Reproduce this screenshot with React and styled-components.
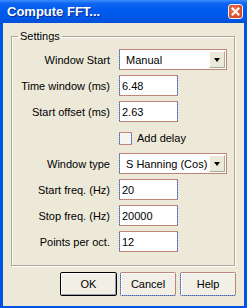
import React from "react";
import styled, { createGlobalStyle, css } from "styled-components";

const colors = {
  xpBlue: "#0054E3",
  face: "#ECE9D8",
  ditherA: "#E26A3E",
  ditherB: "#3A62CC",
  ditherC: "#9C9FB0",
  shadow: "#ACA899",
  text: "#000000",
};

// XP's #7F9DB9 control border, as it looks in a 256-colour (dithered) capture
const dither = css`
  border: 1px solid transparent;
  background:
    linear-gradient(${(p) => p.$fill || "#fff"}, ${(p) => p.$fill || "#fff"}) padding-box,
    conic-gradient(
        ${colors.ditherA} 0 25%,
        ${colors.ditherC} 0 50%,
        ${colors.ditherB} 0 75%,
        ${colors.ditherC} 0
      )
      0 0 / 2px 2px border-box;
`;

const GlobalStyle = createGlobalStyle`
  body {
    margin: 0;
    font-family: "Liberation Sans", Arial, sans-serif;
    font-size: 11px;
  }
`;

const Window = styled.div`
  width: 247px;
  height: 308px;
  box-sizing: border-box;
  background: ${colors.xpBlue};
  display: flex;
  flex-direction: column;
  overflow: hidden;
`;

const TitleBar = styled.div`
  height: 23px;
  flex: none;
  display: flex;
  align-items: center;
  justify-content: space-between;
  padding: 0 3px 0 7px;
  background: linear-gradient(
    to bottom,
    #3A8CFF 0%,
    #0F66F2 15%,
    #005CF0 40%,
    #0056E6 80%,
    #004FD8 100%
  );
`;

const Title = styled.span`
  font-family: "Liberation Sans", Arial, sans-serif;
  font-weight: 700;
  font-size: 13px;
  color: #fff;
  text-shadow: 1px 1px 0 #0A2A8C;
`;

const CloseButton = styled.div`
  width: 15px;
  height: 15px;
  box-sizing: border-box;
  border: 1px solid #F2F2F2;
  border-radius: 3px;
  background: radial-gradient(circle at 40% 40%, #EE7A58, #D6482A 70%);
  display: flex;
  align-items: center;
  justify-content: center;
  margin-right: 1px;
`;

const Content = styled.div`
  flex: 1;
  margin: 0 3px 2px;
  background: ${colors.face};
  padding: 7px 9px 0 8px;
  display: flex;
  flex-direction: column;
`;

const Group = styled.fieldset`
  margin: 0;
  padding: 6px 0 13px 0;
  border: 1px solid #ACA899;
  box-shadow: inset 1px 1px 0 #fff, 1px 1px 0 #fff;
`;

const Legend = styled.legend`
  margin-left: 6px;
  padding: 0 2px;
  line-height: 13px;
  color: ${colors.text};
`;

const Form = styled.div`
  display: grid;
  grid-template-columns: 98px 108px;
  grid-auto-rows: 21px;
  column-gap: 9px;
  row-gap: 5px;
  align-items: center;
`;

const Label = styled.span`
  justify-self: end;
  white-space: nowrap;
  color: ${colors.text};
`;

const Combo = styled.div`
  ${dither};
  box-sizing: border-box;
  width: 108px;
  height: 21px;
  display: flex;
  align-items: center;
  justify-content: space-between;
`;

const ComboText = styled.span`
  padding-left: 6px;
  white-space: nowrap;
`;

const DropButton = styled.div`
  width: 16px;
  height: 17px;
  margin-right: 1px;
  box-sizing: border-box;
  background: ${colors.face};
  border-top: 1px solid #fff;
  border-left: 1px solid #fff;
  border-right: 1px solid ${colors.shadow};
  border-bottom: 1px solid ${colors.shadow};
  display: flex;
  align-items: center;
  justify-content: center;

  &::after {
    content: "";
    width: 0;
    height: 0;
    margin-top: 1px;
    border-left: 3.5px solid transparent;
    border-right: 3.5px solid transparent;
    border-top: 4px solid #000;
  }
`;

const TextBox = styled.input`
  ${dither};
  box-sizing: border-box;
  width: 59px;
  height: 21px;
  padding: 0 0 0 2px;
  font-family: "Liberation Sans", Arial, sans-serif;
  font-size: 11px;
  color: ${colors.text};
  outline: none;
`;

const CheckRow = styled.label`
  grid-column: 2;
  display: flex;
  align-items: center;
  gap: 5px;
  white-space: nowrap;
`;

const CheckBox = styled.span`
  ${dither};
  width: 13px;
  height: 13px;
  box-sizing: border-box;
  margin-top: 1px;
`;

const ButtonRow = styled.div`
  display: flex;
  justify-content: flex-end;
  gap: 4px;
  margin-top: 6px;
  margin-right: -1px;
`;

const Button = styled.button`
  ${dither};
  width: 56px;
  height: 24px;
  box-sizing: border-box;
  border-radius: 2px;
  box-shadow: inset 1px 1px 0 #fff;
  font-family: "Liberation Sans", Arial, sans-serif;
  font-size: 11px;
  color: ${colors.text};
  padding: 0;

  ${(p) =>
    p.$default &&
    css`
      border: 1px solid #000;
      background: #F1EFE6;
      box-shadow: inset 1px 1px 0 #fff, inset -1px -1px 0 ${colors.ditherC};
      width: 57px;
      margin-right: -1px;
    `}
`;

function ComboBox({ value }) {
  return (
    <Combo>
      <ComboText>{value}</ComboText>
      <DropButton />
    </Combo>
  );
}

export default function App() {
  return (
    <>
      <GlobalStyle />
      <Window>
        <TitleBar>
          <Title>Compute FFT...</Title>
          <CloseButton>
            <svg width="9" height="9" viewBox="0 0 9 9">
              <path d="M1.5 1.5 L7.5 7.5 M7.5 1.5 L1.5 7.5" stroke="#fff" strokeWidth="2" strokeLinecap="square" />
            </svg>
          </CloseButton>
        </TitleBar>
        <Content>
          <Group>
            <Legend>Settings</Legend>
            <Form>
              <Label>Window Start</Label>
              <ComboBox value="Manual" />
              <Label>Time window (ms)</Label>
              <TextBox defaultValue="6.48" />
              <Label>Start offset (ms)</Label>
              <TextBox defaultValue="2.63" />
              <CheckRow>
                <CheckBox $fill="#F6F5F0" />
                Add delay
              </CheckRow>
              <Label>Window type</Label>
              <ComboBox value="S Hanning (Cos)" />
              <Label>Start freq. (Hz)</Label>
              <TextBox defaultValue="20" />
              <Label>Stop freq. (Hz)</Label>
              <TextBox defaultValue="20000" />
              <Label>Points per oct.</Label>
              <TextBox defaultValue="12" />
            </Form>
          </Group>
          <ButtonRow>
            <Button $default>OK</Button>
            <Button $fill="#F1EFE6">Cancel</Button>
            <Button $fill="#F1EFE6">Help</Button>
          </ButtonRow>
        </Content>
      </Window>
    </>
  );
}
